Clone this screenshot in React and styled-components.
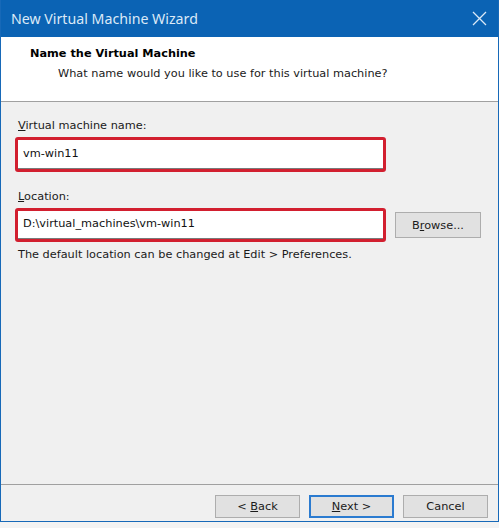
import React from 'react';
import styled, { createGlobalStyle } from 'styled-components';

const GlobalStyle = createGlobalStyle`
  html, body {
    margin: 0;
    padding: 0;
    background: #f3f3f3;
  }
  body {
    font-family: "DejaVu Sans", "Noto Sans", sans-serif;
    font-size: 11.3px;
    color: #111;
  }
`;

const Window = styled.div`
  width: 499px;
  height: 522px;
  box-sizing: border-box;
  display: flex;
  flex-direction: column;
  border: 1px solid #1769b8;
  border-top: none;
  background: #f0f0f0;
`;

const TitleBar = styled.div`
  height: 37px;
  flex-shrink: 0;
  background: #0b63b4;
  display: flex;
  align-items: center;
  justify-content: space-between;
  padding: 0 10px 0 10px;
`;

const TitleText = styled.div`
  font-family: "Noto Sans", "Open Sans", sans-serif;
  font-size: 14.2px;
  color: #dbe9f7;
  padding-bottom: 1px;
`;

const CloseButton = styled.div`
  width: 30px;
  height: 30px;
  display: flex;
  align-items: center;
  justify-content: center;
  margin-right: -6px;
`;

const Header = styled.div`
  height: 65px;
  flex-shrink: 0;
  background: #ffffff;
  border-bottom: 1px solid #a0a0a0;
  box-sizing: border-box;
  padding: 10px 0 0 29px;
`;

const HeaderTitle = styled.div`
  font-weight: bold;
  font-size: 11.3px;
  color: #000;
  line-height: 14px;
`;

const HeaderSub = styled.div`
  margin: 6px 0 0 28px;
  line-height: 14px;
  color: #1a1a1a;
`;

const Body = styled.div`
  flex: 1;
  padding: 17px 0 0 17px;
  display: flex;
  flex-direction: column;
`;

const Label = styled.div`
  line-height: 14px;
  margin-top: ${(p) => p.$top || 0}px;
  color: #1a1a1a;

  u {
    text-decoration: underline;
  }
`;

const FieldRow = styled.div`
  display: flex;
  align-items: center;
  gap: 9px;
  margin-top: 4px;
  margin-left: -3px;
`;

const Highlight = styled.div`
  width: 371px;
  height: ${(p) => p.$h}px;
  box-sizing: border-box;
  border: 3px solid #d21f2f;
  border-radius: 3px;
  display: flex;
`;

const TextInput = styled.div`
  flex: 1;
  background: #ffffff;
  border-bottom: 1px solid #7a7a7a;
  display: flex;
  align-items: center;
  padding-left: 5px;
  padding-bottom: 2px;
  color: #111;
`;

const Button = styled.div`
  width: ${(p) => p.$w || 85}px;
  height: ${(p) => p.$h || 23}px;
  box-sizing: border-box;
  background: #e1e1e1;
  border: 1px solid ${(p) => (p.$primary ? '#2b7bd0' : '#adadad')};
  box-shadow: ${(p) => (p.$primary ? 'inset 0 0 0 1px #2b7bd0' : 'none')};
  display: flex;
  align-items: center;
  justify-content: center;
  color: #1a1a1a;

  u {
    text-decoration: underline;
  }
`;

const Note = styled.div`
  margin-top: 6px;
  line-height: 14px;
  color: #1a1a1a;
`;

const Footer = styled.div`
  height: 37px;
  flex-shrink: 0;
  border-top: 1px solid #a0a0a0;
  box-sizing: border-box;
  display: flex;
  justify-content: flex-end;
  align-items: flex-start;
  gap: 9px;
  padding: 10px 10px 0 0;
`;

const CloseIcon = () => (
  <svg width="15" height="15" viewBox="0 0 15 15">
    <path d="M1 1 L14 14 M14 1 L1 14" stroke="#dbe9f7" strokeWidth="1.3" fill="none" />
  </svg>
);

const App = () => {
  return (
    <>
      <GlobalStyle />
      <Window>
        <TitleBar>
          <TitleText>New Virtual Machine Wizard</TitleText>
          <CloseButton>
            <CloseIcon />
          </CloseButton>
        </TitleBar>
        <Header>
          <HeaderTitle>Name the Virtual Machine</HeaderTitle>
          <HeaderSub>What name would you like to use for this virtual machine?</HeaderSub>
        </Header>
        <Body>
          <Label>
            <u>V</u>irtual machine name:
          </Label>
          <FieldRow>
            <Highlight $h={35}>
              <TextInput>vm-win11</TextInput>
            </Highlight>
          </FieldRow>
          <Label $top={18}>
            <u>L</u>ocation:
          </Label>
          <FieldRow>
            <Highlight $h={34}>
              <TextInput>D:\virtual_machines\vm-win11</TextInput>
            </Highlight>
            <Button $w={86} $h={26}>
              <span>
                B<u>r</u>owse...
              </span>
            </Button>
          </FieldRow>
          <Note>The default location can be changed at Edit &gt; Preferences.</Note>
        </Body>
        <Footer>
          <Button>
            <span>
              &lt; <u>B</u>ack
            </span>
          </Button>
          <Button $primary>
            <span>
              <u>N</u>ext &gt;
            </span>
          </Button>
          <Button>
            <span>Cancel</span>
          </Button>
        </Footer>
      </Window>
    </>
  );
};

export default App;
